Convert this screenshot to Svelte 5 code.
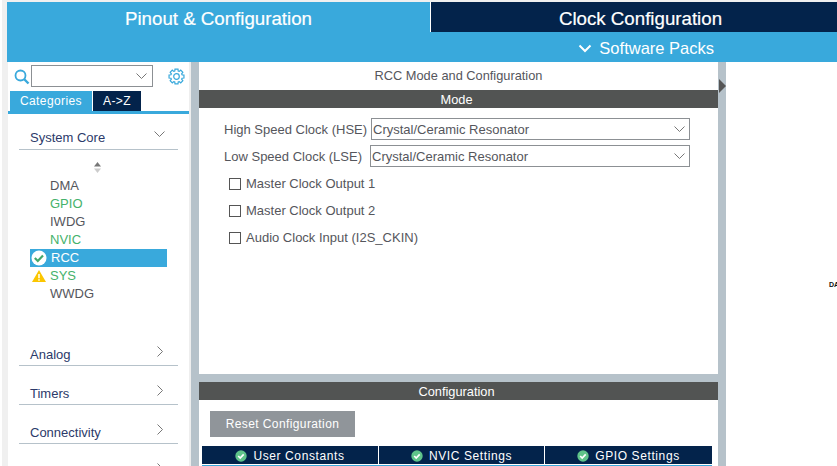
<script>
  const items = [
    { name: "DMA" },
    { name: "GPIO", cls: "ok" },
    { name: "IWDG" },
    { name: "NVIC", cls: "ok" },
    { name: "RCC", cls: "sel" },
    { name: "SYS", cls: "ok warn" },
    { name: "WWDG" }
  ];
  const groups = ["Analog", "Timers", "Connectivity", ""];
  const selects = [
    { label: "High Speed Clock (HSE)", cls: "hse" },
    { label: "Low Speed Clock (LSE)", cls: "lse" }
  ];
  const checks = ["Master Clock Output 1", "Master Clock Output 2", "Audio Clock Input (I2S_CKIN)"];
  const tabs = [
    { name: "User Constants", cls: "t1" },
    { name: "NVIC Settings", cls: "t2" },
    { name: "GPIO Settings", cls: "t3" }
  ];

  // outline of the settings cog, 8 teeth
  function gearPath() {
    let d = "";
    for (let i = 0; i < 8; i++) {
      const a = (i * Math.PI) / 4;
      const pts = [[-0.3, 5.8], [-0.2, 7.6], [0.2, 7.6], [0.3, 5.8]];
      for (const [off, r] of pts) {
        const x = 8.5 + r * Math.cos(a + off);
        const y = 8.5 + r * Math.sin(a + off);
        d += `${d ? "L" : "M"}${x.toFixed(2)} ${y.toFixed(2)}`;
      }
    }
    return d + "Z";
  }
</script>

<main>
  <header>
    <div class="tabs">
      <div class="tab active">Pinout &amp; Configuration</div>
      <div class="tab clock">Clock Configuration</div>
    </div>
    <div class="packs">
      <svg width="14" height="9" viewBox="0 0 14 9"><path d="M1.500 1.500 7 7l5.500-5.500" fill="none" stroke="#fff" stroke-width="2"/></svg>
      <span>Software Packs</span>
    </div>
  </header>

  <div class="body">
    <aside>
      <div class="search">
        <svg class="lens" width="16" height="16" viewBox="0 0 16 16"><circle cx="6.500" cy="6.500" r="5" fill="none" stroke="#39a9dc" stroke-width="1.800"/><path d="m10 10 4.500 4.500" stroke="#39a9dc" stroke-width="2.400"/></svg>
        <div class="combo">
          <svg width="11" height="6" viewBox="0 0 11 6"><path d="m.5.500 5 5 5-5" fill="none" stroke="#777" stroke-width="1"/></svg>
        </div>
        <svg class="gear" width="17" height="17" viewBox="0 0 17 17">
          <path d={gearPath()} fill="none" stroke="#39a9dc" stroke-width="1.200"/>
          <circle cx="8.500" cy="8.500" r="2.800" fill="none" stroke="#39a9dc" stroke-width="1.200"/>
        </svg>
      </div>
      <div class="cat-tabs">
        <div class="cat on">Categories</div>
        <div class="cat az">A-&gt;Z</div>
      </div>
      <div class="tree">
        <div class="group first">
          <span>System Core</span>
          <svg width="11" height="6" viewBox="0 0 11 6"><path d="m.5.500 5 5 5-5" fill="none" stroke="#777" stroke-width="1"/></svg>
        </div>
        <div class="sort">
          <svg width="9" height="12" viewBox="0 0 9 12"><path d="M4.500 0 8 4.500H1z" fill="#777"/><path d="M4.500 11 8 6.500H1z" fill="#ccc"/></svg>
        </div>
        <ul>
          {#each items as item}
            <li class={item.cls}>
              {#if item.name === "RCC"}
                <svg class="mark" width="16" height="16" viewBox="0 0 16 16"><circle cx="8" cy="8" r="7.500" fill="#fff"/><path d="m3.800 8 3 3 5.200-5.500" fill="none" stroke="#45a86b" stroke-width="2.200"/></svg>
              {:else if item.name === "SYS"}
                <svg class="mark" width="14" height="12" viewBox="0 0 14 12"><path d="M7 0 14 12H0z" fill="#fbc600"/><path d="M7 4v4.200M7 9.200v1.500" stroke="#fff" stroke-width="1.500"/></svg>
              {/if}
              {item.name}
            </li>
          {/each}
        </ul>
        {#each groups as group}
          <div class="group">
            <span>{group}</span>
            <svg width="6" height="11" viewBox="0 0 6 11"><path d="m.5.500 5 5-5 5" fill="none" stroke="#777" stroke-width="1"/></svg>
          </div>
        {/each}
      </div>
    </aside>

    <section class="center">
      <div class="mode">
        <div class="title">RCC Mode and Configuration</div>
        <div class="bar">Mode</div>
        <div class="form">
          {#each selects as s}
            <div class="row {s.cls}">
              <span class="lbl">{s.label}</span>
              <div class="select">
                <span>Crystal/Ceramic Resonator</span>
                <svg width="11" height="6" viewBox="0 0 11 6"><path d="m.5.500 5 5 5-5" fill="none" stroke="#777" stroke-width="1"/></svg>
              </div>
            </div>
          {/each}
          <div class="checks">
            {#each checks as c}
              <div class="check"><i></i><span>{c}</span></div>
            {/each}
          </div>
        </div>
      </div>
      <div class="config">
        <div class="bar">Configuration</div>
        <button class="reset" type="button">Reset Configuration</button>
        <div class="cfg-tabs">
          {#each tabs as t}
            <div class="cfg {t.cls}">
              <svg width="12" height="12" viewBox="0 0 12 12"><circle cx="6" cy="6" r="5.700" fill="#5fc48a"/><path d="m3.200 6 2 2 3.500-3.700" fill="none" stroke="#fff" stroke-width="1.700"/></svg>
              <span>{t.name}</span>
            </div>
          {/each}
        </div>
        <div class="cfg-line"></div>
      </div>
    </section>

    <div class="splitter">
      <svg width="7" height="14" viewBox="0 0 7 14"><path d="M0 0 7 7 0 14z" fill="#555"/></svg>
    </div>

    <section class="canvas"><span>DA</span></section>
  </div>
</main>

<style>
  :global(body) {
    margin: 0;
    background: #fff;
    overflow: hidden;
  }
  main {
    width: 837px;
    height: 466px;
    overflow: hidden;
    box-sizing: border-box;
    padding-top: 2px;
    padding-left: 5px;
    border-left: 2px solid #fff;
    background: #f0f0f0;
    font-family: "Liberation Sans", Arial, sans-serif;
    color: #55565c;
    font-size: 13px;
  }
  header {
    height: 60px;
    background: #39a9dc;
    color: #fff;
  }
  .tabs {
    display: flex;
    height: 30px;
  }
  .tab {
    font-size: 18.700px;
    line-height: 34px;
    text-align: center;
    -webkit-text-stroke: 0.2px #fff;
  }
  .active {
    width: 423px;
  }
  .clock {
    flex: 1;
    background: #03234b;
    border-left: 1px solid #fff;
    padding-left: 13px;
  }
  .packs {
    height: 30px;
    padding: 2px 123px 0 0;
    box-sizing: border-box;
    display: flex;
    align-items: center;
    justify-content: flex-end;
    gap: 7px;
    font-size: 16.500px;
  }
  .body {
    display: flex;
    height: 404px;
    background: #fff;
  }
  aside {
    width: 181px;
    background: #fff;
    border-left: 1px solid #f0f0f0;
    border-right: 2px solid #eee;
  }
  .search {
    display: flex;
    align-items: center;
    height: 24px;
    padding-left: 6px;
    padding-top: 2px;
  }
  .lens {
    margin-top: 1px;
  }
  .combo {
    width: 115px;
    height: 20px;
    margin-left: 1px;
    border: 1px solid #8c9094;
    display: flex;
    align-items: center;
    justify-content: flex-end;
    padding-right: 5px;
  }
  .gear {
    margin-left: 15px;
  }
  .cat-tabs {
    display: flex;
    gap: 1px;
    margin-top: 3px;
    padding-left: 2px;
    height: 20px;
  }
  .cat {
    line-height: 20px;
    text-align: center;
    color: #fff;
    font-size: 12px;
    letter-spacing: 0.400px;
  }
  .on {
    width: 82px;
    background: #39a9dc;
  }
  .az {
    width: 48px;
    background: #03234b;
  }
  .tree {
    border-top: 3px solid #39a9dc;
    padding: 0 10px 0 11px;
    height: 400px;
  }
  .group {
    display: flex;
    justify-content: space-between;
    align-items: center;
    width: 159px;
    height: 26px;
    border-bottom: 1px solid #b6c2ca;
    margin-top: 13px;
    box-sizing: border-box;
    padding: 3px 15px 0 11px;
    color: #2c3a6a;
  }
  .group svg {
    margin-top: -6px;
  }
  .group.first {
    margin-top: 0;
    height: 36px;
    padding: 11px 13px 0 11px;
  }
  .sort {
    height: 15px;
    margin-top: 12px;
    padding-left: 74px;
  }
  ul {
    list-style: none;
    margin: 0 0 37px 11px;
    padding: 0;
    width: 137px;
  }
  li {
    position: relative;
    height: 18px;
    line-height: 18px;
    padding-left: 20px;
  }
  .ok {
    color: #45b26b;
  }
  .sel {
    background: #39a9dc;
    color: #fff;
    padding-left: 21px;
  }
  .mark {
    position: absolute;
    left: 1px;
    top: 1px;
  }
  .warn .mark {
    left: 2px;
    top: 3px;
  }
  .center {
    width: 519px;
    border-left: 8px solid #b6c2ca;
    display: flex;
    flex-direction: column;
    background: #b6c2ca;
    gap: 8px;
  }
  .mode {
    height: 312px;
    background: #fff;
  }
  .title {
    height: 28px;
    line-height: 28px;
    text-align: center;
    font-size: 12.800px;
  }
  .bar {
    height: 18px;
    line-height: 19px;
    padding-right: 4px;
    background: #525453;
    color: #fff;
    text-align: center;
    font-size: 12.800px;
  }
  .form {
    padding: 10px 0 0 25px;
  }
  .row {
    display: flex;
    align-items: center;
    height: 22px;
    margin-bottom: 5px;
    width: 466px;
  }
  .lbl {
    white-space: nowrap;
    flex: 1;
  }
  .select {
    box-sizing: border-box;
    height: 22px;
    border: 1px solid #8c9094;
    display: flex;
    align-items: center;
    justify-content: space-between;
    padding: 0 4px 0 1px;
  }
  .hse .select {
    width: 319px;
  }
  .lse .select {
    width: 320px;
  }
  .checks {
    margin-top: -2px;
  }
  .check {
    display: flex;
    align-items: center;
    gap: 5px;
    height: 27px;
    padding-left: 5px;
  }
  .check i {
    width: 10px;
    height: 10px;
    border: 1px solid #555;
  }
  .config {
    flex: 1;
    background: #fff;
  }
  .reset {
    display: block;
    width: 145px;
    height: 26px;
    margin: 11px 0 0 11px;
    border: 0;
    padding: 0;
    background: #90959a;
    color: #fff;
    font: 12px "Liberation Sans", Arial, sans-serif;
    letter-spacing: 0.400px;
  }
  .cfg-tabs {
    display: flex;
    gap: 1px;
    height: 18px;
    margin: 9px 6px 0 3px;
  }
  .cfg {
    background: #03234b;
    color: #fff;
    font-size: 12px;
    display: flex;
    align-items: center;
    justify-content: center;
    gap: 6px;
    padding-top: 1px;
    box-sizing: border-box;
    letter-spacing: 0.600px;
  }
  .t1 {
    width: 176px;
  }
  .t2 {
    width: 165px;
  }
  .t3 {
    flex: 1;
  }
  .cfg-line {
    height: 1px;
    margin: 1px 6px 0 3px;
    background: #39a9dc;
  }
  .splitter {
    width: 8px;
    background: #b6c2ca;
    padding-top: 17px;
    box-sizing: border-box;
    line-height: 0;
  }
  .splitter svg {
    margin-left: 1px;
  }
  .canvas {
    flex: 1;
    background: #fff;
    position: relative;
  }
  .canvas span {
    position: absolute;
    left: 103px;
    top: 219px;
    font-size: 7px;
    color: #111;
    font-weight: 700;
  }
</style>
